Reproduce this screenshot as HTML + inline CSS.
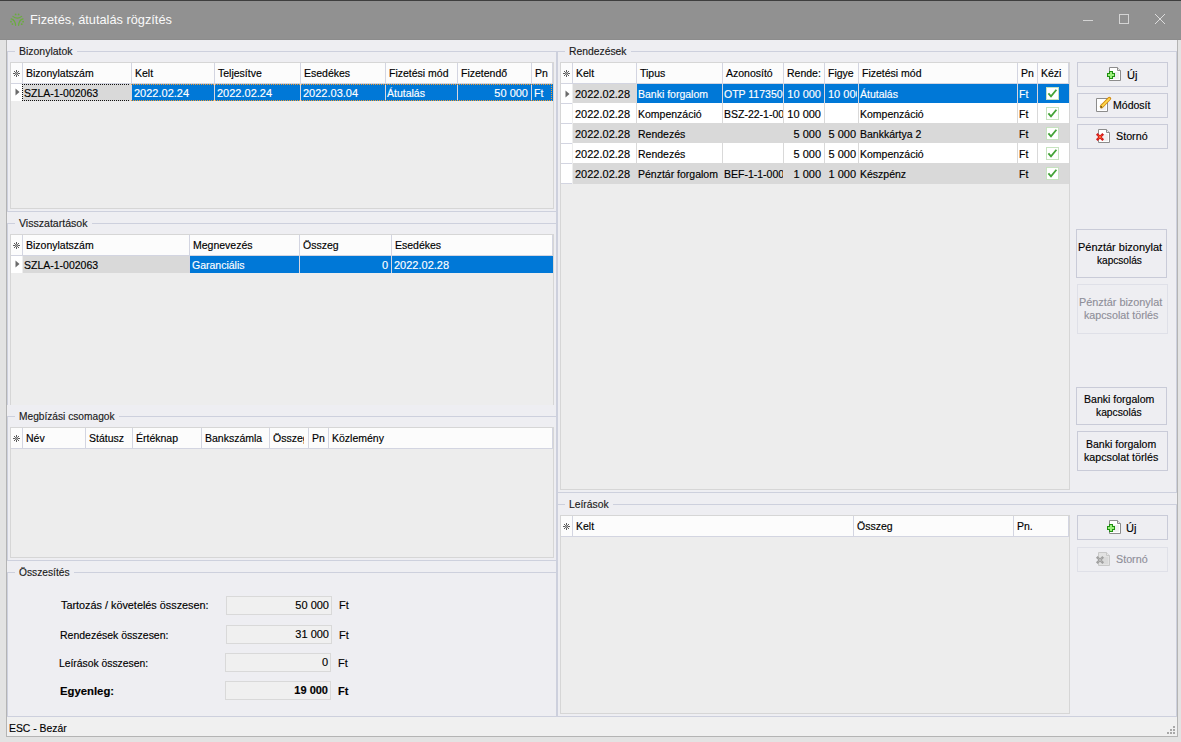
<!DOCTYPE html><html><head><meta charset="utf-8"><style>
html,body{margin:0;padding:0}
body{width:1181px;height:742px;overflow:hidden;position:relative;background:#e3e3e3;font-family:"Liberation Sans",sans-serif;}
.a{position:absolute}
.t{white-space:nowrap;-webkit-text-stroke:0.15px currentColor}
svg.a{overflow:visible}
</style></head><body>
<div class="a" style="left:0px;top:0px;width:1181px;height:40px;background:#919191;"></div>
<div class="a" style="left:0px;top:0px;width:1181px;height:1px;background:#3e3e3e;"></div>
<div class="a" style="left:0px;top:39px;width:1181px;height:1px;background:#8c8c8c;"></div>
<svg class="a" style="left:9px;top:12px" width="16" height="16" viewBox="0 0 16 16"><g fill="none" stroke="#6aad3c" stroke-width="1.2" stroke-linecap="round"><path d="M3.9 4.4 Q8.3 7.8 12.6 4.4"/><path d="M2.2 6.8 Q6.2 7.8 6.6 13.3"/><path d="M14 6.8 Q10 7.8 9.6 13.3"/></g><g fill="#6aad3c"><circle cx="6.6" cy="2.4" r="0.9"/><circle cx="9.6" cy="2.4" r="0.9"/><circle cx="2" cy="9.7" r="0.9"/><circle cx="14.1" cy="9.7" r="0.9"/><circle cx="3.4" cy="12.1" r="0.9"/><circle cx="12.7" cy="12.2" r="0.9"/></g></svg>
<div class="a t" style="left:30px;top:14px;font-size:12.7px;line-height:13px;color:#fafafa;transform:scaleX(1.0058);transform-origin:0 0;-webkit-text-stroke:0;">Fizetés, átutalás rögzítés</div>
<div class="a" style="left:1083px;top:20px;width:10px;height:1px;background:#d4d4d4;"></div>
<div class="a" style="left:1119px;top:14px;width:10px;height:10px;box-shadow:inset 0 0 0 1px #d4d4d4;"></div>
<svg class="a" style="left:1155px;top:14px" width="10" height="10" viewBox="0 0 10 10"><path d="M0 0 L10 10 M10 0 L0 10" stroke="#dcdcdc" stroke-width="1"/></svg>
<div class="a" style="left:6px;top:40px;width:1172px;height:697px;background:#b4b4b4;"></div>
<div class="a" style="left:7px;top:40px;width:1170px;height:676px;background:#eeeef2;"></div>
<div class="a" style="left:7px;top:717px;width:1170px;height:19px;background:#f0f0f0;"></div>
<div class="a" style="left:7px;top:716px;width:1170px;height:1px;background:#cdd0dd;"></div>
<div class="a t" style="left:9px;top:722px;font-size:11px;line-height:13px;color:#000;transform:scaleX(0.9436);transform-origin:0 0;">ESC - Bezár</div>
<div class="a" style="left:1173px;top:726px;width:2px;height:2px;background:#a8a8a8;"></div>
<div class="a" style="left:1170px;top:729px;width:2px;height:2px;background:#a8a8a8;"></div>
<div class="a" style="left:1173px;top:729px;width:2px;height:2px;background:#a8a8a8;"></div>
<div class="a" style="left:1167px;top:732px;width:2px;height:2px;background:#a8a8a8;"></div>
<div class="a" style="left:1170px;top:732px;width:2px;height:2px;background:#a8a8a8;"></div>
<div class="a" style="left:1173px;top:732px;width:2px;height:2px;background:#a8a8a8;"></div>
<div class="a" style="left:7px;top:51px;width:1px;height:161px;background:#cdd0dd;"></div>
<div class="a" style="left:7px;top:223px;width:1px;height:182px;background:#cdd0dd;"></div>
<div class="a" style="left:7px;top:416px;width:1px;height:145px;background:#cdd0dd;"></div>
<div class="a" style="left:7px;top:572px;width:1px;height:145px;background:#cdd0dd;"></div>
<div class="a" style="left:556px;top:51px;width:1px;height:665px;background:#cdd0dd;"></div>
<div class="a" style="left:557px;top:51px;width:1px;height:665px;background:#cdd0dd;"></div>
<div class="a" style="left:1176px;top:51px;width:1px;height:442px;background:#cdd0dd;"></div>
<div class="a" style="left:1176px;top:504px;width:1px;height:212px;background:#cdd0dd;"></div>
<div class="a" style="left:7px;top:211px;width:550px;height:1px;background:#cdd0dd;"></div>
<div class="a" style="left:7px;top:560px;width:550px;height:1px;background:#cdd0dd;"></div>
<div class="a" style="left:558px;top:492px;width:619px;height:1px;background:#cdd0dd;"></div>
<div class="a" style="left:7px;top:51px;width:8px;height:1px;background:#cdd0dd;"></div>
<div class="a" style="left:77px;top:51px;width:480px;height:1px;background:#cdd0dd;"></div>
<div class="a t" style="left:19px;top:45px;font-size:11px;line-height:13px;color:#1a1a1a;transform:scaleX(0.9515);transform-origin:0 0;">Bizonylatok</div>
<div class="a" style="left:7px;top:223px;width:8px;height:1px;background:#cdd0dd;"></div>
<div class="a" style="left:92px;top:223px;width:465px;height:1px;background:#cdd0dd;"></div>
<div class="a t" style="left:19px;top:217px;font-size:11px;line-height:13px;color:#1a1a1a;transform:scaleX(0.9606);transform-origin:0 0;">Visszatartások</div>
<div class="a" style="left:7px;top:416px;width:8px;height:1px;background:#cdd0dd;"></div>
<div class="a" style="left:119px;top:416px;width:438px;height:1px;background:#cdd0dd;"></div>
<div class="a t" style="left:19px;top:410px;font-size:11px;line-height:13px;color:#1a1a1a;transform:scaleX(0.9246);transform-origin:0 0;">Megbízási csomagok</div>
<div class="a" style="left:7px;top:572px;width:8px;height:1px;background:#cdd0dd;"></div>
<div class="a" style="left:74px;top:572px;width:483px;height:1px;background:#cdd0dd;"></div>
<div class="a t" style="left:19px;top:566px;font-size:11px;line-height:13px;color:#1a1a1a;transform:scaleX(0.9289);transform-origin:0 0;">Összesítés</div>
<div class="a" style="left:557px;top:51px;width:8px;height:1px;background:#cdd0dd;"></div>
<div class="a" style="left:631px;top:51px;width:546px;height:1px;background:#cdd0dd;"></div>
<div class="a t" style="left:569px;top:45px;font-size:11px;line-height:13px;color:#1a1a1a;transform:scaleX(0.9408);transform-origin:0 0;">Rendezések</div>
<div class="a" style="left:557px;top:504px;width:8px;height:1px;background:#cdd0dd;"></div>
<div class="a" style="left:613px;top:504px;width:564px;height:1px;background:#cdd0dd;"></div>
<div class="a t" style="left:569px;top:498px;font-size:11px;line-height:13px;color:#1a1a1a;transform:scaleX(0.9370);transform-origin:0 0;">Leírások</div>
<div class="a" style="left:10px;top:62px;width:544px;height:147px;background:#ededed;"></div>
<div class="a" style="left:10px;top:62px;width:544px;height:1px;background:#d6d6d6;"></div>
<div class="a" style="left:10px;top:62px;width:1px;height:147px;background:#d6d6d6;"></div>
<div class="a" style="left:553px;top:62px;width:1px;height:147px;background:#d6d6d6;"></div>
<div class="a" style="left:10px;top:208px;width:544px;height:1px;background:#d6d6d6;"></div>
<div class="a" style="left:11px;top:63px;width:542px;height:20px;background:#fcfcfc;"></div>
<div class="a" style="left:11px;top:83px;width:542px;height:1px;background:#d3d5e1;"></div>
<div class="a" style="left:22px;top:63px;width:1px;height:20px;background:#d3d5e1;"></div>
<div class="a" style="left:131px;top:63px;width:1px;height:20px;background:#d3d5e1;"></div>
<div class="a" style="left:214px;top:63px;width:1px;height:20px;background:#d3d5e1;"></div>
<div class="a" style="left:300px;top:63px;width:1px;height:20px;background:#d3d5e1;"></div>
<div class="a" style="left:385px;top:63px;width:1px;height:20px;background:#d3d5e1;"></div>
<div class="a" style="left:457px;top:63px;width:1px;height:20px;background:#d3d5e1;"></div>
<div class="a" style="left:531px;top:63px;width:1px;height:20px;background:#d3d5e1;"></div>
<div class="a" style="left:552px;top:63px;width:1px;height:20px;background:#d3d5e1;"></div>
<svg class="a" style="left:13px;top:70px" width="7" height="7" viewBox="0 0 7 7" shape-rendering="crispEdges"><rect x="3" y="0" width="1" height="1" fill="#5a5a5a"/><rect x="3" y="1" width="1" height="1" fill="#5a5a5a"/><rect x="1" y="1" width="1" height="1" fill="#5a5a5a"/><rect x="5" y="1" width="1" height="1" fill="#5a5a5a"/><rect x="2" y="2" width="1" height="1" fill="#707070"/><rect x="4" y="2" width="1" height="1" fill="#707070"/><rect x="3" y="2" width="1" height="1" fill="#b0b0b0"/><rect x="0" y="3" width="1" height="1" fill="#5a5a5a"/><rect x="1" y="3" width="1" height="1" fill="#5a5a5a"/><rect x="2" y="3" width="1" height="1" fill="#b0b0b0"/><rect x="3" y="3" width="1" height="1" fill="#707070"/><rect x="4" y="3" width="1" height="1" fill="#b0b0b0"/><rect x="5" y="3" width="1" height="1" fill="#5a5a5a"/><rect x="6" y="3" width="1" height="1" fill="#5a5a5a"/><rect x="2" y="4" width="1" height="1" fill="#707070"/><rect x="4" y="4" width="1" height="1" fill="#707070"/><rect x="3" y="4" width="1" height="1" fill="#b0b0b0"/><rect x="1" y="5" width="1" height="1" fill="#5a5a5a"/><rect x="5" y="5" width="1" height="1" fill="#5a5a5a"/><rect x="3" y="5" width="1" height="1" fill="#5a5a5a"/><rect x="3" y="6" width="1" height="1" fill="#5a5a5a"/></svg>
<div class="a t" style="left:26px;top:67px;font-size:10.5px;line-height:13px;color:#000;">Bizonylatszám</div>
<div class="a t" style="left:135px;top:67px;font-size:10.5px;line-height:13px;color:#000;">Kelt</div>
<div class="a t" style="left:218px;top:67px;font-size:10.5px;line-height:13px;color:#000;">Teljesítve</div>
<div class="a t" style="left:304px;top:67px;font-size:10.5px;line-height:13px;color:#000;">Esedékes</div>
<div class="a t" style="left:389px;top:67px;font-size:10.5px;line-height:13px;color:#000;">Fizetési mód</div>
<div class="a t" style="left:461px;top:67px;font-size:10.5px;line-height:13px;color:#000;">Fizetendő</div>
<div class="a t" style="left:535px;top:67px;font-size:10.5px;line-height:13px;color:#000;">Pn</div>
<div class="a" style="left:11px;top:84px;width:11px;height:17px;background:#ffffff;"></div>
<svg class="a" style="left:15px;top:88px" width="5" height="8" viewBox="0 0 5 8"><path d="M0.5 0.5 L4.5 4 L0.5 7.5 Z" fill="#6b6b6b"/></svg>
<div class="a" style="left:23px;top:84px;width:108px;height:17px;overflow:hidden;background:#d9d9d9;"><div class="a t" style="left:1px;top:3px;font-size:10.5px;line-height:13px;color:#000;">SZLA-1-002063</div></div>
<div class="a" style="left:132px;top:84px;width:82px;height:17px;overflow:hidden;background:#0078d7;"><div class="a t" style="left:2px;top:3px;font-size:11px;line-height:13px;color:#fff;">2022.02.24</div></div>
<div class="a" style="left:215px;top:84px;width:85px;height:17px;overflow:hidden;background:#0078d7;"><div class="a t" style="left:2px;top:3px;font-size:11px;line-height:13px;color:#fff;">2022.02.24</div></div>
<div class="a" style="left:301px;top:84px;width:84px;height:17px;overflow:hidden;background:#0078d7;"><div class="a t" style="left:2px;top:3px;font-size:11px;line-height:13px;color:#fff;">2022.03.04</div></div>
<div class="a" style="left:386px;top:84px;width:71px;height:17px;overflow:hidden;background:#0078d7;"><div class="a t" style="left:1px;top:3px;font-size:10.5px;line-height:13px;color:#fff;">Átutalás</div></div>
<div class="a" style="left:458px;top:84px;width:73px;height:17px;overflow:hidden;background:#0078d7;"><div class="a t" style="right:3px;top:3px;font-size:11px;line-height:13px;color:#fff;">50 000</div></div>
<div class="a" style="left:532px;top:84px;width:21px;height:17px;overflow:hidden;background:#0078d7;"><div class="a t" style="left:2px;top:3px;font-size:10.5px;line-height:13px;color:#fff;">Ft</div></div>
<div class="a" style="left:131px;top:84px;width:1px;height:17px;background:#d8d6de;"></div>
<div class="a" style="left:214px;top:84px;width:1px;height:17px;background:#d8d6de;"></div>
<div class="a" style="left:300px;top:84px;width:1px;height:17px;background:#d8d6de;"></div>
<div class="a" style="left:385px;top:84px;width:1px;height:17px;background:#d8d6de;"></div>
<div class="a" style="left:457px;top:84px;width:1px;height:17px;background:#d8d6de;"></div>
<div class="a" style="left:531px;top:84px;width:1px;height:17px;background:#d8d6de;"></div>
<div class="a" style="left:22px;top:84px;width:108px;height:1px;background:repeating-linear-gradient(90deg,#111 0 1px,transparent 1px 2px);"></div>
<div class="a" style="left:22px;top:100px;width:108px;height:1px;background:repeating-linear-gradient(90deg,#111 0 1px,transparent 1px 2px);"></div>
<div class="a" style="left:22px;top:84px;width:1px;height:17px;background:repeating-linear-gradient(180deg,#111 0 1px,transparent 1px 2px);"></div>
<div class="a" style="left:131px;top:84px;width:421px;height:1px;background:repeating-linear-gradient(90deg,#f59a2c 0 1px,transparent 1px 2px);"></div>
<div class="a" style="left:131px;top:100px;width:421px;height:1px;background:repeating-linear-gradient(90deg,#f59a2c 0 1px,transparent 1px 2px);"></div>
<div class="a" style="left:551px;top:84px;width:1px;height:17px;background:repeating-linear-gradient(180deg,#f59a2c 0 1px,transparent 1px 2px);"></div>
<div class="a" style="left:10px;top:234px;width:544px;height:171px;background:#ededed;"></div>
<div class="a" style="left:10px;top:234px;width:544px;height:1px;background:#d6d6d6;"></div>
<div class="a" style="left:10px;top:234px;width:1px;height:171px;background:#d6d6d6;"></div>
<div class="a" style="left:553px;top:234px;width:1px;height:171px;background:#d6d6d6;"></div>
<div class="a" style="left:11px;top:235px;width:542px;height:20px;background:#fcfcfc;"></div>
<div class="a" style="left:11px;top:255px;width:542px;height:1px;background:#d3d5e1;"></div>
<div class="a" style="left:22px;top:235px;width:1px;height:20px;background:#d3d5e1;"></div>
<div class="a" style="left:189px;top:235px;width:1px;height:20px;background:#d3d5e1;"></div>
<div class="a" style="left:299px;top:235px;width:1px;height:20px;background:#d3d5e1;"></div>
<div class="a" style="left:391px;top:235px;width:1px;height:20px;background:#d3d5e1;"></div>
<div class="a" style="left:552px;top:235px;width:1px;height:20px;background:#d3d5e1;"></div>
<svg class="a" style="left:13px;top:242px" width="7" height="7" viewBox="0 0 7 7" shape-rendering="crispEdges"><rect x="3" y="0" width="1" height="1" fill="#5a5a5a"/><rect x="3" y="1" width="1" height="1" fill="#5a5a5a"/><rect x="1" y="1" width="1" height="1" fill="#5a5a5a"/><rect x="5" y="1" width="1" height="1" fill="#5a5a5a"/><rect x="2" y="2" width="1" height="1" fill="#707070"/><rect x="4" y="2" width="1" height="1" fill="#707070"/><rect x="3" y="2" width="1" height="1" fill="#b0b0b0"/><rect x="0" y="3" width="1" height="1" fill="#5a5a5a"/><rect x="1" y="3" width="1" height="1" fill="#5a5a5a"/><rect x="2" y="3" width="1" height="1" fill="#b0b0b0"/><rect x="3" y="3" width="1" height="1" fill="#707070"/><rect x="4" y="3" width="1" height="1" fill="#b0b0b0"/><rect x="5" y="3" width="1" height="1" fill="#5a5a5a"/><rect x="6" y="3" width="1" height="1" fill="#5a5a5a"/><rect x="2" y="4" width="1" height="1" fill="#707070"/><rect x="4" y="4" width="1" height="1" fill="#707070"/><rect x="3" y="4" width="1" height="1" fill="#b0b0b0"/><rect x="1" y="5" width="1" height="1" fill="#5a5a5a"/><rect x="5" y="5" width="1" height="1" fill="#5a5a5a"/><rect x="3" y="5" width="1" height="1" fill="#5a5a5a"/><rect x="3" y="6" width="1" height="1" fill="#5a5a5a"/></svg>
<div class="a t" style="left:26px;top:239px;font-size:10.5px;line-height:13px;color:#000;">Bizonylatszám</div>
<div class="a t" style="left:193px;top:239px;font-size:10.5px;line-height:13px;color:#000;">Megnevezés</div>
<div class="a t" style="left:303px;top:239px;font-size:10.5px;line-height:13px;color:#000;">Összeg</div>
<div class="a t" style="left:395px;top:239px;font-size:10.5px;line-height:13px;color:#000;">Esedékes</div>
<div class="a" style="left:11px;top:256px;width:11px;height:17px;background:#ffffff;"></div>
<svg class="a" style="left:15px;top:260px" width="5" height="8" viewBox="0 0 5 8"><path d="M0.5 0.5 L4.5 4 L0.5 7.5 Z" fill="#6b6b6b"/></svg>
<div class="a" style="left:23px;top:256px;width:166px;height:17px;overflow:hidden;background:#d9d9d9;"><div class="a t" style="left:1px;top:3px;font-size:10.5px;line-height:13px;color:#000;">SZLA-1-002063</div></div>
<div class="a" style="left:190px;top:256px;width:109px;height:17px;overflow:hidden;background:#0078d7;"><div class="a t" style="left:2px;top:3px;font-size:10.5px;line-height:13px;color:#fff;">Garanciális</div></div>
<div class="a" style="left:300px;top:256px;width:91px;height:17px;overflow:hidden;background:#0078d7;"><div class="a t" style="right:3px;top:3px;font-size:11px;line-height:13px;color:#fff;">0</div></div>
<div class="a" style="left:392px;top:256px;width:161px;height:17px;overflow:hidden;background:#0078d7;"><div class="a t" style="left:2px;top:3px;font-size:11px;line-height:13px;color:#fff;">2022.02.28</div></div>
<div class="a" style="left:189px;top:256px;width:1px;height:17px;background:#d8d6de;"></div>
<div class="a" style="left:299px;top:256px;width:1px;height:17px;background:#d8d6de;"></div>
<div class="a" style="left:391px;top:256px;width:1px;height:17px;background:#d8d6de;"></div>
<div class="a" style="left:10px;top:427px;width:544px;height:131px;background:#ededed;"></div>
<div class="a" style="left:10px;top:427px;width:544px;height:1px;background:#d6d6d6;"></div>
<div class="a" style="left:10px;top:427px;width:1px;height:131px;background:#d6d6d6;"></div>
<div class="a" style="left:553px;top:427px;width:1px;height:131px;background:#d6d6d6;"></div>
<div class="a" style="left:10px;top:557px;width:544px;height:1px;background:#d6d6d6;"></div>
<div class="a" style="left:11px;top:428px;width:542px;height:20px;background:#fcfcfc;"></div>
<div class="a" style="left:11px;top:448px;width:542px;height:1px;background:#d3d5e1;"></div>
<div class="a" style="left:22px;top:428px;width:1px;height:20px;background:#d3d5e1;"></div>
<div class="a" style="left:85px;top:428px;width:1px;height:20px;background:#d3d5e1;"></div>
<div class="a" style="left:132px;top:428px;width:1px;height:20px;background:#d3d5e1;"></div>
<div class="a" style="left:201px;top:428px;width:1px;height:20px;background:#d3d5e1;"></div>
<div class="a" style="left:269px;top:428px;width:1px;height:20px;background:#d3d5e1;"></div>
<div class="a" style="left:308px;top:428px;width:1px;height:20px;background:#d3d5e1;"></div>
<div class="a" style="left:328px;top:428px;width:1px;height:20px;background:#d3d5e1;"></div>
<div class="a" style="left:552px;top:428px;width:1px;height:20px;background:#d3d5e1;"></div>
<svg class="a" style="left:13px;top:435px" width="7" height="7" viewBox="0 0 7 7" shape-rendering="crispEdges"><rect x="3" y="0" width="1" height="1" fill="#5a5a5a"/><rect x="3" y="1" width="1" height="1" fill="#5a5a5a"/><rect x="1" y="1" width="1" height="1" fill="#5a5a5a"/><rect x="5" y="1" width="1" height="1" fill="#5a5a5a"/><rect x="2" y="2" width="1" height="1" fill="#707070"/><rect x="4" y="2" width="1" height="1" fill="#707070"/><rect x="3" y="2" width="1" height="1" fill="#b0b0b0"/><rect x="0" y="3" width="1" height="1" fill="#5a5a5a"/><rect x="1" y="3" width="1" height="1" fill="#5a5a5a"/><rect x="2" y="3" width="1" height="1" fill="#b0b0b0"/><rect x="3" y="3" width="1" height="1" fill="#707070"/><rect x="4" y="3" width="1" height="1" fill="#b0b0b0"/><rect x="5" y="3" width="1" height="1" fill="#5a5a5a"/><rect x="6" y="3" width="1" height="1" fill="#5a5a5a"/><rect x="2" y="4" width="1" height="1" fill="#707070"/><rect x="4" y="4" width="1" height="1" fill="#707070"/><rect x="3" y="4" width="1" height="1" fill="#b0b0b0"/><rect x="1" y="5" width="1" height="1" fill="#5a5a5a"/><rect x="5" y="5" width="1" height="1" fill="#5a5a5a"/><rect x="3" y="5" width="1" height="1" fill="#5a5a5a"/><rect x="3" y="6" width="1" height="1" fill="#5a5a5a"/></svg>
<div class="a t" style="left:26px;top:432px;font-size:10.5px;line-height:13px;color:#000;">Név</div>
<div class="a t" style="left:89px;top:432px;font-size:10.5px;line-height:13px;color:#000;">Státusz</div>
<div class="a t" style="left:136px;top:432px;font-size:10.5px;line-height:13px;color:#000;">Értéknap</div>
<div class="a t" style="left:205px;top:432px;font-size:10.5px;line-height:13px;color:#000;">Bankszámla</div>
<div class="a" style="left:273px;top:428px;width:31px;height:20px;overflow:hidden;"><div class="a t" style="left:0px;top:4px;font-size:10.5px;line-height:13px;color:#000;">Összeg</div></div>
<div class="a t" style="left:312px;top:432px;font-size:10.5px;line-height:13px;color:#000;">Pn</div>
<div class="a t" style="left:332px;top:432px;font-size:10.5px;line-height:13px;color:#000;">Közlemény</div>
<div class="a" style="left:560px;top:62px;width:510px;height:428px;background:#ededed;"></div>
<div class="a" style="left:560px;top:62px;width:510px;height:1px;background:#d6d6d6;"></div>
<div class="a" style="left:560px;top:62px;width:1px;height:428px;background:#d6d6d6;"></div>
<div class="a" style="left:1069px;top:62px;width:1px;height:428px;background:#d6d6d6;"></div>
<div class="a" style="left:560px;top:489px;width:510px;height:1px;background:#d6d6d6;"></div>
<div class="a" style="left:561px;top:63px;width:508px;height:20px;background:#fcfcfc;"></div>
<div class="a" style="left:561px;top:83px;width:508px;height:1px;background:#d3d5e1;"></div>
<div class="a" style="left:572px;top:63px;width:1px;height:20px;background:#d3d5e1;"></div>
<div class="a" style="left:636px;top:63px;width:1px;height:20px;background:#d3d5e1;"></div>
<div class="a" style="left:722px;top:63px;width:1px;height:20px;background:#d3d5e1;"></div>
<div class="a" style="left:783px;top:63px;width:1px;height:20px;background:#d3d5e1;"></div>
<div class="a" style="left:824px;top:63px;width:1px;height:20px;background:#d3d5e1;"></div>
<div class="a" style="left:858px;top:63px;width:1px;height:20px;background:#d3d5e1;"></div>
<div class="a" style="left:1017px;top:63px;width:1px;height:20px;background:#d3d5e1;"></div>
<div class="a" style="left:1037px;top:63px;width:1px;height:20px;background:#d3d5e1;"></div>
<div class="a" style="left:1068px;top:63px;width:1px;height:20px;background:#d3d5e1;"></div>
<svg class="a" style="left:563px;top:70px" width="7" height="7" viewBox="0 0 7 7" shape-rendering="crispEdges"><rect x="3" y="0" width="1" height="1" fill="#5a5a5a"/><rect x="3" y="1" width="1" height="1" fill="#5a5a5a"/><rect x="1" y="1" width="1" height="1" fill="#5a5a5a"/><rect x="5" y="1" width="1" height="1" fill="#5a5a5a"/><rect x="2" y="2" width="1" height="1" fill="#707070"/><rect x="4" y="2" width="1" height="1" fill="#707070"/><rect x="3" y="2" width="1" height="1" fill="#b0b0b0"/><rect x="0" y="3" width="1" height="1" fill="#5a5a5a"/><rect x="1" y="3" width="1" height="1" fill="#5a5a5a"/><rect x="2" y="3" width="1" height="1" fill="#b0b0b0"/><rect x="3" y="3" width="1" height="1" fill="#707070"/><rect x="4" y="3" width="1" height="1" fill="#b0b0b0"/><rect x="5" y="3" width="1" height="1" fill="#5a5a5a"/><rect x="6" y="3" width="1" height="1" fill="#5a5a5a"/><rect x="2" y="4" width="1" height="1" fill="#707070"/><rect x="4" y="4" width="1" height="1" fill="#707070"/><rect x="3" y="4" width="1" height="1" fill="#b0b0b0"/><rect x="1" y="5" width="1" height="1" fill="#5a5a5a"/><rect x="5" y="5" width="1" height="1" fill="#5a5a5a"/><rect x="3" y="5" width="1" height="1" fill="#5a5a5a"/><rect x="3" y="6" width="1" height="1" fill="#5a5a5a"/></svg>
<div class="a t" style="left:576px;top:67px;font-size:10.5px;line-height:13px;color:#000;">Kelt</div>
<div class="a t" style="left:640px;top:67px;font-size:10.5px;line-height:13px;color:#000;">Tipus</div>
<div class="a t" style="left:726px;top:67px;font-size:10.5px;line-height:13px;color:#000;">Azonosító</div>
<div class="a" style="left:787px;top:63px;width:36px;height:20px;overflow:hidden;"><div class="a t" style="left:0px;top:4px;font-size:10.5px;line-height:13px;color:#000;">Rende:</div></div>
<div class="a" style="left:828px;top:63px;width:29px;height:20px;overflow:hidden;"><div class="a t" style="left:0px;top:4px;font-size:10.5px;line-height:13px;color:#000;">Figye</div></div>
<div class="a t" style="left:862px;top:67px;font-size:10.5px;line-height:13px;color:#000;">Fizetési mód</div>
<div class="a t" style="left:1021px;top:67px;font-size:10.5px;line-height:13px;color:#000;">Pn</div>
<div class="a" style="left:1041px;top:63px;width:23px;height:20px;overflow:hidden;"><div class="a t" style="left:0px;top:4px;font-size:10.5px;line-height:13px;color:#000;">Kézi rögzítés</div></div>
<div class="a" style="left:561px;top:84px;width:11px;height:19px;background:#ffffff;"></div>
<div class="a" style="left:561px;top:103px;width:11px;height:1px;background:#d3d5e1;"></div>
<div class="a" style="left:573px;top:83px;width:63px;height:20px;overflow:hidden;background:#d9d9d9;"><div class="a t" style="left:2px;top:5px;font-size:11px;line-height:13px;color:#000;">2022.02.28</div></div>
<div class="a" style="left:637px;top:83px;width:85px;height:20px;overflow:hidden;background:#0078d7;"><div class="a t" style="left:1px;top:5px;font-size:10.5px;line-height:13px;color:#fff;">Banki forgalom</div></div>
<div class="a" style="left:723px;top:83px;width:60px;height:20px;overflow:hidden;background:#0078d7;"><div class="a t" style="left:1px;top:5px;font-size:10.5px;line-height:13px;color:#fff;">OTP 11735005-20449898</div></div>
<div class="a" style="left:784px;top:83px;width:40px;height:20px;overflow:hidden;background:#0078d7;"><div class="a t" style="right:3px;top:5px;font-size:11px;line-height:13px;color:#fff;">10 000</div></div>
<div class="a" style="left:825px;top:83px;width:32px;height:20px;overflow:hidden;background:#0078d7;"><div class="a t" style="left:3px;top:5px;font-size:11px;line-height:13px;color:#fff;">10 000</div></div>
<div class="a" style="left:857px;top:83px;width:1px;height:20px;background:#0078d7;"></div>
<div class="a" style="left:859px;top:83px;width:158px;height:20px;overflow:hidden;background:#0078d7;"><div class="a t" style="left:1px;top:5px;font-size:10.5px;line-height:13px;color:#fff;">Átutalás</div></div>
<div class="a" style="left:1018px;top:83px;width:19px;height:20px;overflow:hidden;background:#0078d7;"><div class="a t" style="left:1px;top:5px;font-size:10.5px;line-height:13px;color:#fff;">Ft</div></div>
<div class="a" style="left:1038px;top:83px;width:31px;height:20px;overflow:hidden;background:#0078d7;"></div>
<div class="a" style="left:636px;top:83px;width:1px;height:20px;background:#d9d9d9;"></div>
<div class="a" style="left:722px;top:83px;width:1px;height:20px;background:#d8d6de;"></div>
<div class="a" style="left:783px;top:83px;width:1px;height:20px;background:#d8d6de;"></div>
<div class="a" style="left:824px;top:83px;width:1px;height:20px;background:#d8d6de;"></div>
<div class="a" style="left:858px;top:83px;width:1px;height:20px;background:#d8d6de;"></div>
<div class="a" style="left:1017px;top:83px;width:1px;height:20px;background:#d8d6de;"></div>
<div class="a" style="left:1037px;top:83px;width:1px;height:20px;background:#d8d6de;"></div>
<div class="a" style="left:1046px;top:87px;width:13px;height:13px;background:#fff;box-shadow:inset 0 0 0 1px #c6e3bf;"></div>
<svg class="a" style="left:1046px;top:87px" width="13" height="13" viewBox="0 0 13 13"><path d="M2.4 6.3 L5 9.3 L10.4 2.7" fill="none" stroke="#44a338" stroke-width="1.8"/></svg>
<div class="a" style="left:561px;top:104px;width:11px;height:19px;background:#ffffff;"></div>
<div class="a" style="left:561px;top:123px;width:11px;height:1px;background:#d3d5e1;"></div>
<div class="a" style="left:573px;top:103px;width:63px;height:20px;overflow:hidden;background:#ffffff;"><div class="a t" style="left:2px;top:5px;font-size:11px;line-height:13px;color:#000;">2022.02.28</div></div>
<div class="a" style="left:637px;top:103px;width:85px;height:20px;overflow:hidden;background:#ffffff;"><div class="a t" style="left:1px;top:5px;font-size:10.5px;line-height:13px;color:#000;">Kompenzáció</div></div>
<div class="a" style="left:723px;top:103px;width:60px;height:20px;overflow:hidden;background:#ffffff;"><div class="a t" style="left:1px;top:5px;font-size:10.5px;line-height:13px;color:#000;">BSZ-22-1-000012</div></div>
<div class="a" style="left:784px;top:103px;width:40px;height:20px;overflow:hidden;background:#ffffff;"><div class="a t" style="right:3px;top:5px;font-size:11px;line-height:13px;color:#000;">10 000</div></div>
<div class="a" style="left:825px;top:103px;width:33px;height:20px;overflow:hidden;background:#ffffff;"></div>
<div class="a" style="left:859px;top:103px;width:158px;height:20px;overflow:hidden;background:#ffffff;"><div class="a t" style="left:1px;top:5px;font-size:10.5px;line-height:13px;color:#000;">Kompenzáció</div></div>
<div class="a" style="left:1018px;top:103px;width:19px;height:20px;overflow:hidden;background:#ffffff;"><div class="a t" style="left:1px;top:5px;font-size:10.5px;line-height:13px;color:#000;">Ft</div></div>
<div class="a" style="left:1038px;top:103px;width:31px;height:20px;overflow:hidden;background:#ffffff;"></div>
<div class="a" style="left:636px;top:103px;width:1px;height:20px;background:#d9d9d9;"></div>
<div class="a" style="left:722px;top:103px;width:1px;height:20px;background:#d9d9d9;"></div>
<div class="a" style="left:783px;top:103px;width:1px;height:20px;background:#d9d9d9;"></div>
<div class="a" style="left:824px;top:103px;width:1px;height:20px;background:#d9d9d9;"></div>
<div class="a" style="left:858px;top:103px;width:1px;height:20px;background:#d9d9d9;"></div>
<div class="a" style="left:1017px;top:103px;width:1px;height:20px;background:#d9d9d9;"></div>
<div class="a" style="left:1037px;top:103px;width:1px;height:20px;background:#d9d9d9;"></div>
<div class="a" style="left:1046px;top:107px;width:13px;height:13px;background:#fff;box-shadow:inset 0 0 0 1px #c6e3bf;"></div>
<svg class="a" style="left:1046px;top:107px" width="13" height="13" viewBox="0 0 13 13"><path d="M2.4 6.3 L5 9.3 L10.4 2.7" fill="none" stroke="#44a338" stroke-width="1.8"/></svg>
<div class="a" style="left:561px;top:124px;width:11px;height:19px;background:#ffffff;"></div>
<div class="a" style="left:561px;top:143px;width:11px;height:1px;background:#d3d5e1;"></div>
<div class="a" style="left:573px;top:123px;width:63px;height:20px;overflow:hidden;background:#d9d9d9;"><div class="a t" style="left:2px;top:5px;font-size:11px;line-height:13px;color:#000;">2022.02.28</div></div>
<div class="a" style="left:637px;top:123px;width:85px;height:20px;overflow:hidden;background:#d9d9d9;"><div class="a t" style="left:1px;top:5px;font-size:10.5px;line-height:13px;color:#000;">Rendezés</div></div>
<div class="a" style="left:723px;top:123px;width:60px;height:20px;overflow:hidden;background:#d9d9d9;"></div>
<div class="a" style="left:784px;top:123px;width:40px;height:20px;overflow:hidden;background:#d9d9d9;"><div class="a t" style="right:3px;top:5px;font-size:11px;line-height:13px;color:#000;">5 000</div></div>
<div class="a" style="left:825px;top:123px;width:33px;height:20px;overflow:hidden;background:#d9d9d9;"><div class="a t" style="right:2px;top:5px;font-size:11px;line-height:13px;color:#000;">5 000</div></div>
<div class="a" style="left:859px;top:123px;width:158px;height:20px;overflow:hidden;background:#d9d9d9;"><div class="a t" style="left:1px;top:5px;font-size:10.5px;line-height:13px;color:#000;">Bankkártya 2</div></div>
<div class="a" style="left:1018px;top:123px;width:19px;height:20px;overflow:hidden;background:#d9d9d9;"><div class="a t" style="left:1px;top:5px;font-size:10.5px;line-height:13px;color:#000;">Ft</div></div>
<div class="a" style="left:1038px;top:123px;width:31px;height:20px;overflow:hidden;background:#d9d9d9;"></div>
<div class="a" style="left:636px;top:123px;width:1px;height:20px;background:#d9d9d9;"></div>
<div class="a" style="left:722px;top:123px;width:1px;height:20px;background:#d9d9d9;"></div>
<div class="a" style="left:783px;top:123px;width:1px;height:20px;background:#d9d9d9;"></div>
<div class="a" style="left:824px;top:123px;width:1px;height:20px;background:#d9d9d9;"></div>
<div class="a" style="left:858px;top:123px;width:1px;height:20px;background:#d9d9d9;"></div>
<div class="a" style="left:1017px;top:123px;width:1px;height:20px;background:#d9d9d9;"></div>
<div class="a" style="left:1037px;top:123px;width:1px;height:20px;background:#d9d9d9;"></div>
<div class="a" style="left:1046px;top:127px;width:13px;height:13px;background:#fff;box-shadow:inset 0 0 0 1px #c6e3bf;"></div>
<svg class="a" style="left:1046px;top:127px" width="13" height="13" viewBox="0 0 13 13"><path d="M2.4 6.3 L5 9.3 L10.4 2.7" fill="none" stroke="#44a338" stroke-width="1.8"/></svg>
<div class="a" style="left:561px;top:144px;width:11px;height:19px;background:#ffffff;"></div>
<div class="a" style="left:561px;top:163px;width:11px;height:1px;background:#d3d5e1;"></div>
<div class="a" style="left:573px;top:143px;width:63px;height:20px;overflow:hidden;background:#ffffff;"><div class="a t" style="left:2px;top:5px;font-size:11px;line-height:13px;color:#000;">2022.02.28</div></div>
<div class="a" style="left:637px;top:143px;width:85px;height:20px;overflow:hidden;background:#ffffff;"><div class="a t" style="left:1px;top:5px;font-size:10.5px;line-height:13px;color:#000;">Rendezés</div></div>
<div class="a" style="left:723px;top:143px;width:60px;height:20px;overflow:hidden;background:#ffffff;"></div>
<div class="a" style="left:784px;top:143px;width:40px;height:20px;overflow:hidden;background:#ffffff;"><div class="a t" style="right:3px;top:5px;font-size:11px;line-height:13px;color:#000;">5 000</div></div>
<div class="a" style="left:825px;top:143px;width:33px;height:20px;overflow:hidden;background:#ffffff;"><div class="a t" style="right:2px;top:5px;font-size:11px;line-height:13px;color:#000;">5 000</div></div>
<div class="a" style="left:859px;top:143px;width:158px;height:20px;overflow:hidden;background:#ffffff;"><div class="a t" style="left:1px;top:5px;font-size:10.5px;line-height:13px;color:#000;">Kompenzáció</div></div>
<div class="a" style="left:1018px;top:143px;width:19px;height:20px;overflow:hidden;background:#ffffff;"><div class="a t" style="left:1px;top:5px;font-size:10.5px;line-height:13px;color:#000;">Ft</div></div>
<div class="a" style="left:1038px;top:143px;width:31px;height:20px;overflow:hidden;background:#ffffff;"></div>
<div class="a" style="left:636px;top:143px;width:1px;height:20px;background:#d9d9d9;"></div>
<div class="a" style="left:722px;top:143px;width:1px;height:20px;background:#d9d9d9;"></div>
<div class="a" style="left:783px;top:143px;width:1px;height:20px;background:#d9d9d9;"></div>
<div class="a" style="left:824px;top:143px;width:1px;height:20px;background:#d9d9d9;"></div>
<div class="a" style="left:858px;top:143px;width:1px;height:20px;background:#d9d9d9;"></div>
<div class="a" style="left:1017px;top:143px;width:1px;height:20px;background:#d9d9d9;"></div>
<div class="a" style="left:1037px;top:143px;width:1px;height:20px;background:#d9d9d9;"></div>
<div class="a" style="left:1046px;top:147px;width:13px;height:13px;background:#fff;box-shadow:inset 0 0 0 1px #c6e3bf;"></div>
<svg class="a" style="left:1046px;top:147px" width="13" height="13" viewBox="0 0 13 13"><path d="M2.4 6.3 L5 9.3 L10.4 2.7" fill="none" stroke="#44a338" stroke-width="1.8"/></svg>
<div class="a" style="left:561px;top:164px;width:11px;height:19px;background:#ffffff;"></div>
<div class="a" style="left:561px;top:183px;width:11px;height:1px;background:#d3d5e1;"></div>
<div class="a" style="left:573px;top:163px;width:63px;height:20px;overflow:hidden;background:#d9d9d9;"><div class="a t" style="left:2px;top:5px;font-size:11px;line-height:13px;color:#000;">2022.02.28</div></div>
<div class="a" style="left:637px;top:163px;width:85px;height:20px;overflow:hidden;background:#d9d9d9;"><div class="a t" style="left:1px;top:5px;font-size:10.5px;line-height:13px;color:#000;">Pénztár forgalom</div></div>
<div class="a" style="left:723px;top:163px;width:60px;height:20px;overflow:hidden;background:#d9d9d9;"><div class="a t" style="left:1px;top:5px;font-size:10.5px;line-height:13px;color:#000;">BEF-1-1-000123</div></div>
<div class="a" style="left:784px;top:163px;width:40px;height:20px;overflow:hidden;background:#d9d9d9;"><div class="a t" style="right:3px;top:5px;font-size:11px;line-height:13px;color:#000;">1 000</div></div>
<div class="a" style="left:825px;top:163px;width:33px;height:20px;overflow:hidden;background:#d9d9d9;"><div class="a t" style="right:2px;top:5px;font-size:11px;line-height:13px;color:#000;">1 000</div></div>
<div class="a" style="left:859px;top:163px;width:158px;height:20px;overflow:hidden;background:#d9d9d9;"><div class="a t" style="left:1px;top:5px;font-size:10.5px;line-height:13px;color:#000;">Készpénz</div></div>
<div class="a" style="left:1018px;top:163px;width:19px;height:20px;overflow:hidden;background:#d9d9d9;"><div class="a t" style="left:1px;top:5px;font-size:10.5px;line-height:13px;color:#000;">Ft</div></div>
<div class="a" style="left:1038px;top:163px;width:31px;height:20px;overflow:hidden;background:#d9d9d9;"></div>
<div class="a" style="left:636px;top:163px;width:1px;height:20px;background:#d9d9d9;"></div>
<div class="a" style="left:722px;top:163px;width:1px;height:20px;background:#d9d9d9;"></div>
<div class="a" style="left:783px;top:163px;width:1px;height:20px;background:#d9d9d9;"></div>
<div class="a" style="left:824px;top:163px;width:1px;height:20px;background:#d9d9d9;"></div>
<div class="a" style="left:858px;top:163px;width:1px;height:20px;background:#d9d9d9;"></div>
<div class="a" style="left:1017px;top:163px;width:1px;height:20px;background:#d9d9d9;"></div>
<div class="a" style="left:1037px;top:163px;width:1px;height:20px;background:#d9d9d9;"></div>
<div class="a" style="left:1046px;top:167px;width:13px;height:13px;background:#fff;box-shadow:inset 0 0 0 1px #c6e3bf;"></div>
<svg class="a" style="left:1046px;top:167px" width="13" height="13" viewBox="0 0 13 13"><path d="M2.4 6.3 L5 9.3 L10.4 2.7" fill="none" stroke="#44a338" stroke-width="1.8"/></svg>
<div class="a" style="left:573px;top:183px;width:496px;height:1px;background:#d9d9d9;"></div>
<div class="a" style="left:561px;top:83px;width:508px;height:1px;background:#d3d5e1;"></div>
<svg class="a" style="left:565px;top:90px" width="5" height="8" viewBox="0 0 5 8"><path d="M0.5 0.5 L4.5 4 L0.5 7.5 Z" fill="#6b6b6b"/></svg>
<div class="a" style="left:560px;top:515px;width:510px;height:199px;background:#ededed;"></div>
<div class="a" style="left:560px;top:515px;width:510px;height:1px;background:#d6d6d6;"></div>
<div class="a" style="left:560px;top:515px;width:1px;height:199px;background:#d6d6d6;"></div>
<div class="a" style="left:1069px;top:515px;width:1px;height:199px;background:#d6d6d6;"></div>
<div class="a" style="left:560px;top:713px;width:510px;height:1px;background:#d6d6d6;"></div>
<div class="a" style="left:561px;top:516px;width:508px;height:20px;background:#fcfcfc;"></div>
<div class="a" style="left:561px;top:536px;width:508px;height:1px;background:#d3d5e1;"></div>
<div class="a" style="left:572px;top:516px;width:1px;height:20px;background:#d3d5e1;"></div>
<div class="a" style="left:853px;top:516px;width:1px;height:20px;background:#d3d5e1;"></div>
<div class="a" style="left:1013px;top:516px;width:1px;height:20px;background:#d3d5e1;"></div>
<div class="a" style="left:1068px;top:516px;width:1px;height:20px;background:#d3d5e1;"></div>
<svg class="a" style="left:563px;top:523px" width="7" height="7" viewBox="0 0 7 7" shape-rendering="crispEdges"><rect x="3" y="0" width="1" height="1" fill="#5a5a5a"/><rect x="3" y="1" width="1" height="1" fill="#5a5a5a"/><rect x="1" y="1" width="1" height="1" fill="#5a5a5a"/><rect x="5" y="1" width="1" height="1" fill="#5a5a5a"/><rect x="2" y="2" width="1" height="1" fill="#707070"/><rect x="4" y="2" width="1" height="1" fill="#707070"/><rect x="3" y="2" width="1" height="1" fill="#b0b0b0"/><rect x="0" y="3" width="1" height="1" fill="#5a5a5a"/><rect x="1" y="3" width="1" height="1" fill="#5a5a5a"/><rect x="2" y="3" width="1" height="1" fill="#b0b0b0"/><rect x="3" y="3" width="1" height="1" fill="#707070"/><rect x="4" y="3" width="1" height="1" fill="#b0b0b0"/><rect x="5" y="3" width="1" height="1" fill="#5a5a5a"/><rect x="6" y="3" width="1" height="1" fill="#5a5a5a"/><rect x="2" y="4" width="1" height="1" fill="#707070"/><rect x="4" y="4" width="1" height="1" fill="#707070"/><rect x="3" y="4" width="1" height="1" fill="#b0b0b0"/><rect x="1" y="5" width="1" height="1" fill="#5a5a5a"/><rect x="5" y="5" width="1" height="1" fill="#5a5a5a"/><rect x="3" y="5" width="1" height="1" fill="#5a5a5a"/><rect x="3" y="6" width="1" height="1" fill="#5a5a5a"/></svg>
<div class="a t" style="left:576px;top:520px;font-size:10.5px;line-height:13px;color:#000;">Kelt</div>
<div class="a t" style="left:857px;top:520px;font-size:10.5px;line-height:13px;color:#000;">Összeg</div>
<div class="a t" style="left:1017px;top:520px;font-size:10.5px;line-height:13px;color:#000;">Pn.</div>
<div class="a" style="left:1077px;top:62px;width:91px;height:25px;background:#eeeef2;box-shadow:inset 0 0 0 1px #c9cbd8;"></div>
<div class="a t" style="left:1126.6px;top:69px;font-size:11px;line-height:13px;color:#000;transform:scaleX(1.0056);transform-origin:0 0;">Új</div>
<svg class="a" style="left:1109px;top:67px" width="12" height="14" viewBox="0 0 12 14"><path d="M0.5 0.5 H8.5 L11.5 3.5 V13.5 H0.5 Z" fill="#ffffff" stroke="#8c8c8c"/><path d="M8.5 0.5 V3.5 H11.5" fill="#e8e8e8" stroke="#8c8c8c"/><rect x="4" y="5" width="6" height="7" fill="#e6e6e6" opacity="0.6"/></svg>
<svg class="a" style="left:1107px;top:71px" width="8" height="8" viewBox="0 0 8 8" shape-rendering="crispEdges"><path d="M2 0 H6 V2 H8 V6 H6 V8 H2 V6 H0 V2 H2 Z" fill="#1f8f12"/><path d="M3 1 H5 V3 H7 V5 H5 V7 H3 V5 H1 V3 H3 Z" fill="#9cf07c"/></svg>
<div class="a" style="left:1077px;top:93px;width:91px;height:25px;background:#eeeef2;box-shadow:inset 0 0 0 1px #c9cbd8;"></div>
<div class="a t" style="left:1113.4px;top:99px;font-size:11px;line-height:13px;color:#000;transform:scaleX(0.9572);transform-origin:0 0;">Módosít</div>
<svg class="a" style="left:1096px;top:98px" width="12" height="14" viewBox="0 0 12 14"><path d="M0.5 0.5 H11.5 V13.5 H0.5 Z" fill="#ffffff" stroke="#8c8c8c"/><rect x="4" y="5" width="6" height="7" fill="#e6e6e6" opacity="0.6"/></svg>
<svg class="a" style="left:1096px;top:96px" width="16" height="16" viewBox="0 0 16 16"><path d="M5.6 10.6 L13.4 2.6" stroke="#d18a12" stroke-width="3.6" stroke-linecap="round"/><path d="M5.8 10.4 L13.2 2.8" stroke="#ffd84a" stroke-width="1.8" stroke-linecap="round"/><circle cx="5.3" cy="10.9" r="0.9" fill="#6b5a1a"/></svg>
<div class="a" style="left:1077px;top:124px;width:91px;height:25px;background:#eeeef2;box-shadow:inset 0 0 0 1px #c9cbd8;"></div>
<div class="a t" style="left:1115.5px;top:130px;font-size:11px;line-height:13px;color:#000;transform:scaleX(0.9755);transform-origin:0 0;">Stornó</div>
<svg class="a" style="left:1098px;top:129px" width="12" height="14" viewBox="0 0 12 14"><path d="M0.5 0.5 H8.5 L11.5 3.5 V13.5 H0.5 Z" fill="#ffffff" stroke="#8c8c8c"/><path d="M8.5 0.5 V3.5 H11.5" fill="#e8e8e8" stroke="#8c8c8c"/><rect x="4" y="5" width="6" height="7" fill="#e6e6e6" opacity="0.6"/></svg>
<svg class="a" style="left:1096px;top:133px" width="8" height="8" viewBox="0 0 8 8"><path d="M0.8 0.8 L7.2 7.2 M7.2 0.8 L0.8 7.2" stroke="#d41c1c" stroke-width="2.4"/><path d="M2.5 2.5 L5.5 5.5 M5.5 2.5 L2.5 5.5" stroke="#ff6a2a" stroke-width="1"/></svg>
<div class="a" style="left:1076px;top:229px;width:91px;height:49px;background:#eeeef2;box-shadow:inset 0 0 0 1px #c9cbd8;"></div>
<div class="a t" style="left:1078px;top:241px;font-size:11px;line-height:13px;color:#000;transform:scaleX(0.9962);transform-origin:0 0;">Pénztár bizonylat</div>
<div class="a t" style="left:1096.7px;top:254px;font-size:11px;line-height:13px;color:#000;transform:scaleX(0.9167);transform-origin:0 0;">kapcsolás</div>
<div class="a" style="left:1077px;top:284px;width:91px;height:50px;background:#eeeef2;box-shadow:inset 0 0 0 1px #dfe0e8;"></div>
<div class="a t" style="left:1079.4px;top:296px;font-size:11px;line-height:13px;color:#8f8f99;transform:scaleX(0.9867);transform-origin:0 0;">Pénztár bizonylat</div>
<div class="a t" style="left:1083.8px;top:309px;font-size:11px;line-height:13px;color:#8f8f99;transform:scaleX(0.9737);transform-origin:0 0;">kapcsolat törlés</div>
<div class="a" style="left:1076px;top:387px;width:91px;height:38px;background:#eeeef2;box-shadow:inset 0 0 0 1px #c9cbd8;"></div>
<div class="a t" style="left:1084.1px;top:393px;font-size:11px;line-height:13px;color:#000;transform:scaleX(0.9576);transform-origin:0 0;">Banki forgalom</div>
<div class="a t" style="left:1096.3px;top:406px;font-size:11px;line-height:13px;color:#000;transform:scaleX(0.9349);transform-origin:0 0;">kapcsolás</div>
<div class="a" style="left:1077px;top:431px;width:91px;height:40px;background:#eeeef2;box-shadow:inset 0 0 0 1px #c9cbd8;"></div>
<div class="a t" style="left:1085.5px;top:438px;font-size:11px;line-height:13px;color:#000;transform:scaleX(0.9562);transform-origin:0 0;">Banki forgalom</div>
<div class="a t" style="left:1083.5px;top:451px;font-size:11px;line-height:13px;color:#000;transform:scaleX(0.9711);transform-origin:0 0;">kapcsolat törlés</div>
<div class="a" style="left:1077px;top:515px;width:91px;height:25px;background:#eeeef2;box-shadow:inset 0 0 0 1px #c9cbd8;"></div>
<div class="a t" style="left:1126px;top:522px;font-size:11px;line-height:13px;color:#000;transform:scaleX(1.0056);transform-origin:0 0;">Új</div>
<svg class="a" style="left:1109px;top:520px" width="12" height="14" viewBox="0 0 12 14"><path d="M0.5 0.5 H8.5 L11.5 3.5 V13.5 H0.5 Z" fill="#ffffff" stroke="#8c8c8c"/><path d="M8.5 0.5 V3.5 H11.5" fill="#e8e8e8" stroke="#8c8c8c"/><rect x="4" y="5" width="6" height="7" fill="#e6e6e6" opacity="0.6"/></svg>
<svg class="a" style="left:1107px;top:524px" width="8" height="8" viewBox="0 0 8 8" shape-rendering="crispEdges"><path d="M2 0 H6 V2 H8 V6 H6 V8 H2 V6 H0 V2 H2 Z" fill="#1f8f12"/><path d="M3 1 H5 V3 H7 V5 H5 V7 H3 V5 H1 V3 H3 Z" fill="#9cf07c"/></svg>
<div class="a" style="left:1077px;top:547px;width:91px;height:25px;background:#eeeef2;box-shadow:inset 0 0 0 1px #dfe0e8;"></div>
<div class="a t" style="left:1115.5px;top:553px;font-size:11px;line-height:13px;color:#8f8f99;transform:scaleX(0.9755);transform-origin:0 0;">Stornó</div>
<svg class="a" style="left:1098px;top:552px" width="12" height="14" viewBox="0 0 12 14"><path d="M0.5 0.5 H8.5 L11.5 3.5 V13.5 H0.5 Z" fill="#e2e2e2" stroke="#c8c8c8"/><path d="M8.5 0.5 V3.5 H11.5" fill="#e8e8e8" stroke="#c8c8c8"/><rect x="4" y="5" width="6" height="7" fill="#d4d4d4" opacity="0.6"/></svg>
<svg class="a" style="left:1096px;top:556px" width="8" height="8" viewBox="0 0 8 8"><path d="M0.8 0.8 L7.2 7.2 M7.2 0.8 L0.8 7.2" stroke="#a0a0a0" stroke-width="2.4"/><path d="M2.5 2.5 L5.5 5.5 M5.5 2.5 L2.5 5.5" stroke="#bdbdbd" stroke-width="1"/></svg>
<div class="a t" style="left:61px;top:599px;font-size:11px;line-height:13px;color:#000;transform:scaleX(0.9851);transform-origin:0 0;">Tartozás / követelés összesen:</div>
<div class="a" style="left:226px;top:596px;width:106px;height:19px;background:#f0f0f0;box-shadow:inset 0 0 0 1px #d9d9d9;"></div>
<div class="a t" style="left:226px;width:103px;text-align:right;top:599px;font-size:11px;line-height:13px;font-weight:normal">50 000</div>
<div class="a t" style="left:339px;top:599px;font-size:11px;line-height:13px;color:#000;">Ft</div>
<div class="a t" style="left:60px;top:629px;font-size:11px;line-height:13px;color:#000;transform:scaleX(0.9536);transform-origin:0 0;">Rendezések összesen:</div>
<div class="a" style="left:226px;top:625px;width:106px;height:19px;background:#f0f0f0;box-shadow:inset 0 0 0 1px #d9d9d9;"></div>
<div class="a t" style="left:226px;width:103px;text-align:right;top:628px;font-size:11px;line-height:13px;font-weight:normal">31 000</div>
<div class="a t" style="left:339px;top:629px;font-size:11px;line-height:13px;color:#000;">Ft</div>
<div class="a t" style="left:59px;top:657px;font-size:11px;line-height:13px;color:#000;transform:scaleX(0.9396);transform-origin:0 0;">Leírások összesen:</div>
<div class="a" style="left:225px;top:653px;width:106px;height:19px;background:#f0f0f0;box-shadow:inset 0 0 0 1px #d9d9d9;"></div>
<div class="a t" style="left:225px;width:103px;text-align:right;top:656px;font-size:11px;line-height:13px;font-weight:normal">0</div>
<div class="a t" style="left:338px;top:657px;font-size:11px;line-height:13px;color:#000;">Ft</div>
<div class="a t" style="left:60px;top:685px;font-size:11px;line-height:13px;color:#000;font-weight:bold;transform:scaleX(1.0288);transform-origin:0 0;">Egyenleg:</div>
<div class="a" style="left:225px;top:681px;width:106px;height:19px;background:#f0f0f0;box-shadow:inset 0 0 0 1px #d9d9d9;"></div>
<div class="a t" style="left:225px;width:103px;text-align:right;top:684px;font-size:11px;line-height:13px;font-weight:bold">19 000</div>
<div class="a t" style="left:338px;top:685px;font-size:11px;line-height:13px;color:#000;font-weight:bold;">Ft</div>
</body></html>
